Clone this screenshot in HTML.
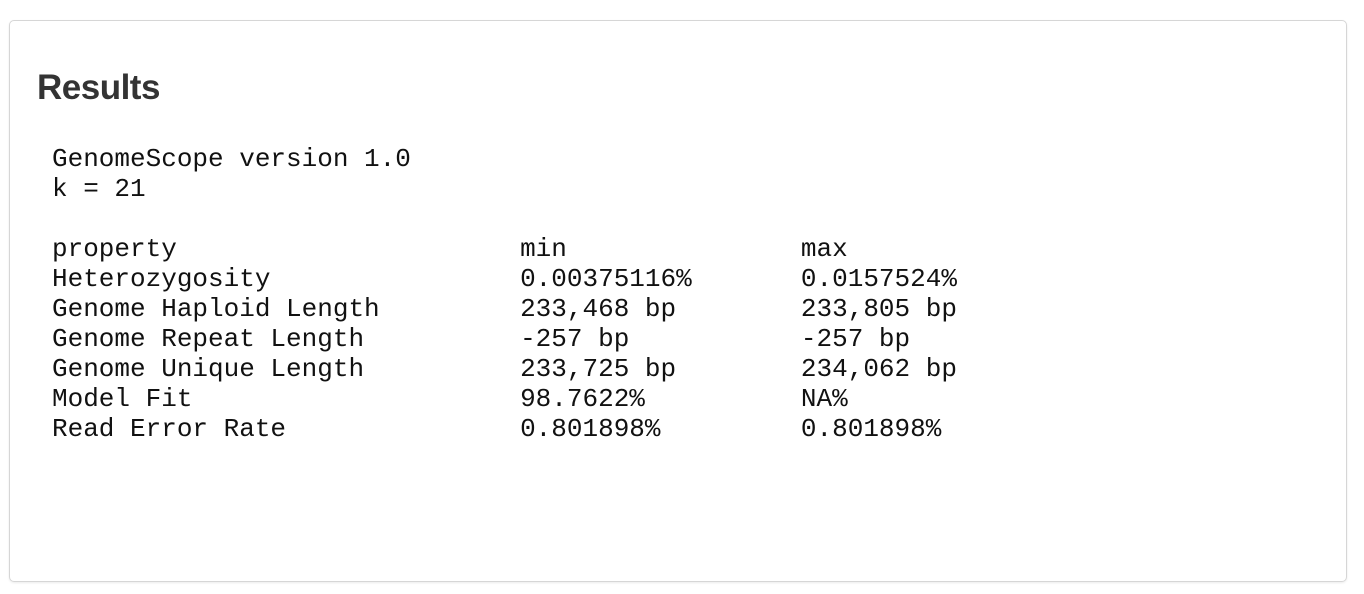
<!DOCTYPE html>
<html><head><meta charset="utf-8"><style>
html,body{margin:0;padding:0;background:#fff;width:1364px;height:594px;overflow:hidden}
.card{position:absolute;left:9px;top:20px;width:1338px;height:562px;border:1px solid #d6d6d6;border-radius:5px;box-shadow:0 1px 2px rgba(0,0,0,0.08);box-sizing:border-box}
h2{position:absolute;left:37px;top:64px;margin:0;font:bold 35px/48px "Liberation Sans",Arial,sans-serif;color:#333;letter-spacing:-0.5px}
pre{position:absolute;left:52px;top:144px;margin:0;font:26px/30px "Liberation Mono","Courier New",monospace;color:#111;letter-spacing:0}
</style></head><body>
<div class="card"></div>
<h2>Results</h2>
<pre>GenomeScope version 1.0
k = 21

property                      min               max
Heterozygosity                0.00375116%       0.0157524%
Genome Haploid Length         233,468 bp        233,805 bp
Genome Repeat Length          -257 bp           -257 bp
Genome Unique Length          233,725 bp        234,062 bp
Model Fit                     98.7622%          NA%
Read Error Rate               0.801898%         0.801898%</pre>
</body></html>
